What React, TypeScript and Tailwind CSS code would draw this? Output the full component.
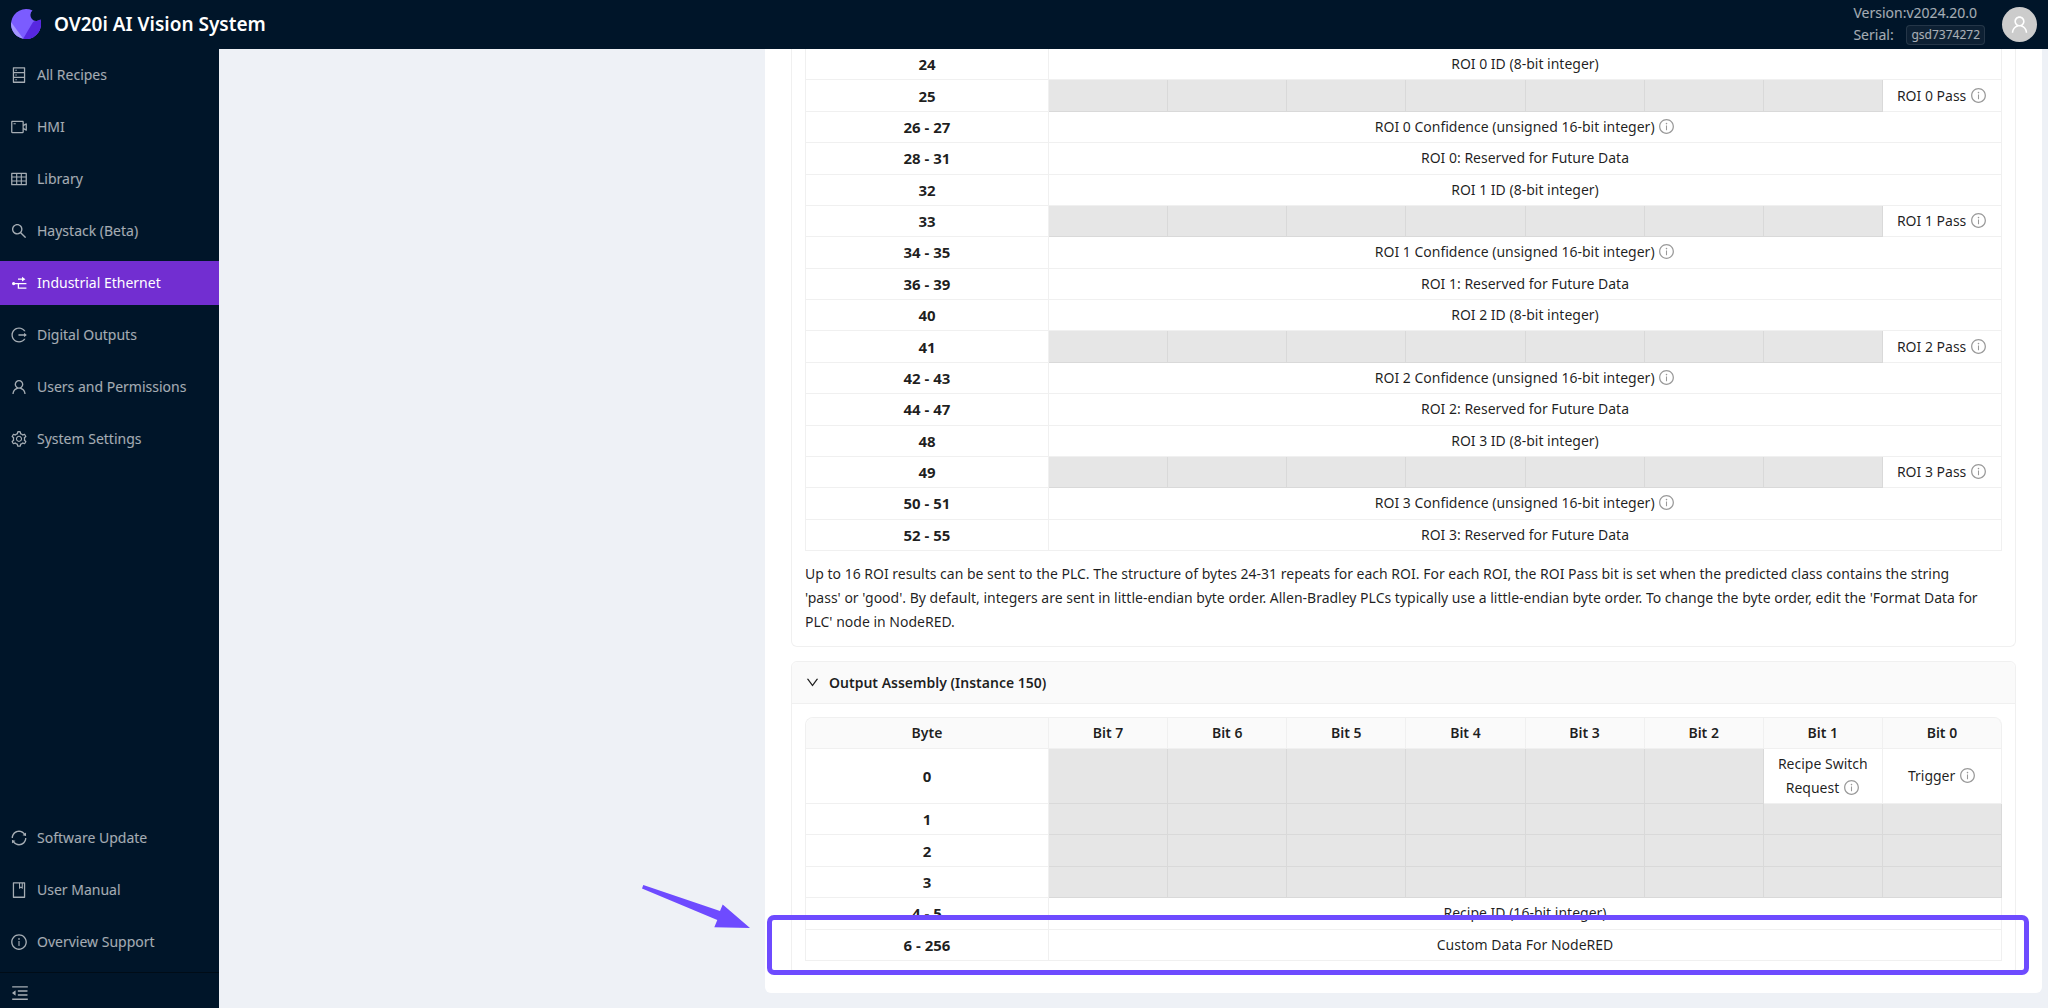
import type { ComponentType, ReactNode } from "react";
import {
  AiOutlineBook,
  AiOutlineDatabase,
  AiOutlineDown,
  AiOutlineInfoCircle,
  AiOutlineLogout,
  AiOutlineMenuFold,
  AiOutlineSearch,
  AiOutlineSetting,
  AiOutlineSync,
  AiOutlineTable,
  AiOutlineUser,
  AiOutlineVideoCamera,
} from "react-icons/ai";

interface NavItem {
  label: string;
  icon: ComponentType<{ size?: number }>;
  active?: boolean;
}

function EthernetIcon({ size = 18 }: { size?: number }) {
  return (
    <svg width={size} height={size} viewBox="0 0 18 18" fill="none" stroke="currentColor" strokeWidth="1.3">
      <circle cx="3.6" cy="9.6" r="1.6" fill="currentColor" stroke="none" />
      <path d="M3.6 9.6H16.4M8.4 9.6V14.2H16.4M8 5.2H13" />
      <path d="M12 2.8L15.4 5.2L12 7.6Z" fill="currentColor" stroke="none" />
    </svg>
  );
}

const mainNav: NavItem[] = [
  { label: "All Recipes", icon: AiOutlineDatabase },
  { label: "HMI", icon: AiOutlineVideoCamera },
  { label: "Library", icon: AiOutlineTable },
  { label: "Haystack (Beta)", icon: AiOutlineSearch },
  { label: "Industrial Ethernet", icon: EthernetIcon, active: true },
  { label: "Digital Outputs", icon: AiOutlineLogout },
  { label: "Users and Permissions", icon: AiOutlineUser },
  { label: "System Settings", icon: AiOutlineSetting },
];

const footerNav: NavItem[] = [
  { label: "Software Update", icon: AiOutlineSync },
  { label: "User Manual", icon: AiOutlineBook },
  { label: "Overview Support", icon: AiOutlineInfoCircle },
];

const bits = [7, 6, 5, 4, 3, 2, 1, 0];

function Logo() {
  return (
    <svg width="30" height="30" viewBox="0 0 30 30" aria-hidden="true">
      <defs>
        <clipPath id="logo-disc">
          <path d="M21.5 1.5A15 15 0 1 0 29.4 10.6A5.6 5.6 0 0 1 21.5 1.5Z" />
        </clipPath>
      </defs>
      <g clipPath="url(#logo-disc)">
        <rect width="30" height="30" fill="#7b5cff" />
        <path d="M30 9L22 13L12 30H30Z" fill="#5727e0" />
        <path d="M0 13L12.5 30H0Z" fill="#a596ff" />
      </g>
    </svg>
  );
}

function NavList({ items }: { items: NavItem[] }) {
  return (
    <ul className="space-y-2">
      {items.map(({ label, icon: Icon, active }) => (
        <li key={label}>
          <a
            href="#"
            className={`flex h-11 items-center gap-[9px] pl-[10px] ${
              active ? "bg-[#722ed1] text-white" : "text-white/65 hover:text-white"
            }`}
          >
            <Icon size={18} />
            {label}
          </a>
        </li>
      ))}
    </ul>
  );
}

function Header() {
  return (
    <header className="flex h-[49px] items-center bg-[#001529] px-[11px] pb-px text-white/65">
      <Logo />
      <h1 className="ml-[13px] flex-1 text-[19px] font-semibold text-white">OV20i AI Vision System</h1>
      <dl className="mr-[17px] grid grid-cols-[auto_auto] items-center text-[14px] leading-[22px]">
        <dt>Version:</dt>
        <dd>v2024.20.0</dd>
        <dt>Serial:</dt>
        <dd>
          <code className="block rounded border border-white/10 bg-white/5 px-1 font-['Noto_Sans',sans-serif] text-[12px] leading-[18px]">
            gsd7374272
          </code>
        </dd>
      </dl>
      <button
        aria-label="Account"
        className="flex h-[35px] w-[35px] items-center justify-center rounded-full bg-[#cccccc] text-white"
      >
        <AiOutlineUser size={21} />
      </button>
    </header>
  );
}

function Info() {
  return <AiOutlineInfoCircle size={17} className="inline align-[-3px] text-black/40" />;
}

function Columns() {
  return (
    <colgroup>
      <col className="w-[243px]" />
      {bits.map((bit) => (
        <col key={bit} />
      ))}
    </colgroup>
  );
}

function ByteCell({ children }: { children: ReactNode }) {
  return (
    <th scope="row" className="border-r border-b border-[#f0f0f0] text-[15px] font-bold">
      {children}
    </th>
  );
}

function SpanRow({ byte, children }: { byte: string; children: ReactNode }) {
  return (
    <tr>
      <ByteCell>{byte}</ByteCell>
      <td colSpan={8} className="border-r border-b border-[#f0f0f0]">
        {children}
      </td>
    </tr>
  );
}

interface BitRowProps {
  byte: string;
  unused: number;
  className?: string;
  children?: ReactNode;
}

function BitRow({ byte, unused, className, children }: BitRowProps) {
  return (
    <tr className={className}>
      <ByteCell>{byte}</ByteCell>
      {bits.slice(0, unused).map((bit) => (
        <td key={bit} className="border-r border-b border-[#d9d9d9] bg-[#e6e6e6]" />
      ))}
      {children}
    </tr>
  );
}

function InputTable() {
  return (
    <table className="h-[502px] w-full table-fixed border-separate border-spacing-0 border-l border-[#f0f0f0] text-center">
      <Columns />
      {[0, 1, 2, 3].map((roi) => {
        const start = 24 + roi * 8;
        return (
          <tbody key={roi}>
            <SpanRow byte={`${start}`}>ROI {roi} ID (8-bit integer)</SpanRow>
            <BitRow byte={`${start + 1}`} unused={7}>
              <td className="border-r border-b border-[#f0f0f0] whitespace-nowrap">
                ROI {roi} Pass <Info />
              </td>
            </BitRow>
            <SpanRow byte={`${start + 2} - ${start + 3}`}>
              ROI {roi} Confidence (unsigned 16-bit integer) <Info />
            </SpanRow>
            <SpanRow byte={`${start + 4} - ${start + 7}`}>ROI {roi}: Reserved for Future Data</SpanRow>
          </tbody>
        );
      })}
    </table>
  );
}

function OutputTable() {
  return (
    <table className="h-[244px] w-full table-fixed border-separate border-spacing-0 rounded-t-lg border-t border-l border-[#f0f0f0] text-center">
      <Columns />
      <tbody>
        <tr className="h-[31px] bg-[#fafafa]">
          <th scope="col" className="rounded-tl-lg border-r border-b border-[#f0f0f0] font-semibold">
            Byte
          </th>
          {bits.map((bit) => (
            <th
              key={bit}
              scope="col"
              className="border-r border-b border-[#f0f0f0] font-semibold last:rounded-tr-lg"
            >
              Bit {bit}
            </th>
          ))}
        </tr>
        <BitRow byte="0" unused={6} className="h-[55px]">
          <td className="border-r border-b border-[#f0f0f0] px-2 py-[3px]">
            Recipe Switch Request <Info />
          </td>
          <td className="border-r border-b border-[#f0f0f0]">
            Trigger <Info />
          </td>
        </BitRow>
        <BitRow byte="1" unused={8} />
        <BitRow byte="2" unused={8} />
        <BitRow byte="3" unused={8} />
        <SpanRow byte="4 - 5">Recipe ID (16-bit integer)</SpanRow>
        <SpanRow byte="6 - 256">Custom Data For NodeRED</SpanRow>
      </tbody>
    </table>
  );
}

// Frame round the custom data row, with an arrow pointing at its left edge
function Highlight() {
  return (
    <div className="pointer-events-none absolute -right-[27px] -bottom-[14px] -left-[38px] h-[60px] rounded-[7px] border-[5px] border-[#6e4bff]">
      <svg
        width="110"
        height="46"
        viewBox="0 0 110 46"
        className="absolute -top-[35px] -left-[131px]"
        fill="#6e4bff"
        aria-hidden="true"
      >
        <path d="M2.3 0L79 26L81.7 19.5L109 43L73.3 42.3L76.3 35L1 3.5Z" />
      </svg>
    </div>
  );
}

export default function App() {
  return (
    <div className="flex h-screen flex-col overflow-hidden bg-[#eef1f6] font-['Noto_Sans',sans-serif] text-[14px] leading-6 text-black/88">
      <Header />
      <div className="flex min-h-0 flex-1">
        <nav className="flex w-[219px] shrink-0 flex-col bg-[#001529] pt-1">
          <NavList items={mainNav} />
          <div className="mt-auto mb-2">
            <NavList items={footerNav} />
          </div>
          <button
            aria-label="Collapse menu"
            className="flex h-9 items-center border-t border-[#000c17] pt-[5px] pl-[10px] text-white/65"
          >
            <AiOutlineMenuFold size={20} />
          </button>
        </nav>
        <main className="flex min-w-0 flex-1 items-start pr-[6px]">
          <div className="w-[546px] shrink-0" />
          <div className="min-w-0 flex-1 rounded-b-md bg-white px-[26px] pb-[18px]">
            <section className="rounded-b-md border border-t-0 border-[#f0f0f0] px-[13px] pb-3">
              <InputTable />
              <p className="mt-[11px]">
                Up to 16 ROI results can be sent to the PLC. The structure of bytes 24-31 repeats for each
                ROI. For each ROI, the ROI Pass bit is set when the predicted class contains the string
                <br />
                'pass' or 'good'. By default, integers are sent in little-endian byte order. Allen-Bradley
                PLCs typically use a little-endian byte order. To change the byte order, edit the 'Format
                Data for
                <br />
                PLC' node in NodeRED.
              </p>
            </section>
            <section className="mt-[14px] rounded-md border border-[#f0f0f0]">
              <h2>
                <button className="flex h-[42px] w-full items-center gap-[9px] rounded-t-md border-b border-[#f0f0f0] bg-[#fafafa] px-[13px] font-semibold">
                  <AiOutlineDown size={15} />
                  Output Assembly (Instance 150)
                </button>
              </h2>
              <div className="px-[13px] py-[13px]">
                <div className="relative">
                  <OutputTable />
                  <Highlight />
                </div>
              </div>
            </section>
          </div>
        </main>
      </div>
    </div>
  );
}
